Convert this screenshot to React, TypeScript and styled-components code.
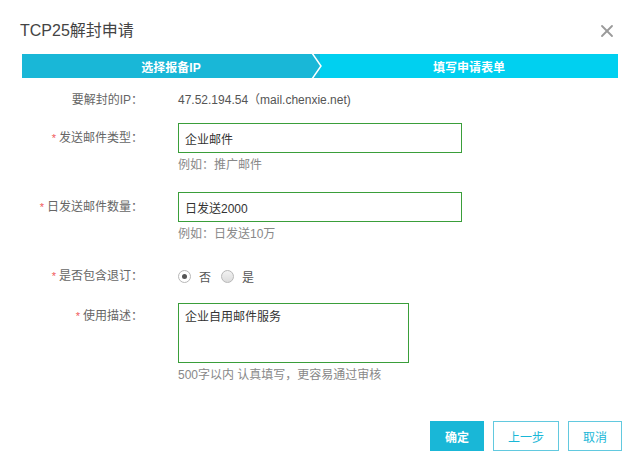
import React from 'react';
import styled, { createGlobalStyle } from 'styled-components';
import { X } from 'lucide-react';

const GlobalStyle = createGlobalStyle`
  html, body {
    margin: 0;
    padding: 0;
    background: #fff;
  }
  body {
    font-family: "Liberation Sans", "Noto Sans CJK SC", sans-serif;
    font-size: 12px;
    color: #555;
  }
`;

const CYAN = '#19b7d7';

const Dialog = styled.div`
  width: 640px;
  height: 466px;
  background: #fff;
  box-sizing: border-box;
`;

const Header = styled.div`
  display: flex;
  align-items: center;
  justify-content: space-between;
  padding: 20px 23px 0 20px;
  height: 42px;
  box-sizing: border-box;
`;

const Title = styled.h3`
  margin: 0;
  font-size: 16px;
  font-weight: normal;
  line-height: 22px;
  color: #444;
`;

const CloseButton = styled.button`
  border: 0;
  background: none;
  padding: 0;
  display: flex;
  color: #9a9a9a;
  cursor: pointer;
`;

// ============================================================
// Step bar
// ============================================================
const StepBar = styled.div`
  position: relative;
  display: flex;
  height: 24px;
  margin: 12px 22px 0;
`;

const Step = styled.div<{ $done?: boolean }>`
  flex: 1;
  display: flex;
  align-items: center;
  justify-content: center;
  background: ${(p) => (p.$done ? CYAN : '#00d0f0')};
  color: #fff;
  font-size: 12px;
  font-weight: bold;
`;

const StepArrow = styled.svg`
  position: absolute;
  top: 0;
  left: 50%;
  margin-left: -16px;
`;

// ============================================================
// Form
// ============================================================
const Form = styled.div`
  display: flex;
  flex-direction: column;
  padding-left: 22px;
`;

const Row = styled.div<{ $top: number }>`
  display: flex;
  align-items: flex-start;
  margin-top: ${(p) => p.$top}px;
`;

const Label = styled.div<{ $lh?: number }>`
  width: 121px;
  flex-shrink: 0;
  text-align: right;
  line-height: ${(p) => p.$lh ?? 20}px;
  color: #666;
`;

const Required = styled.span`
  color: #f05a5a;
  font-size: 11px;
  margin-right: 3px;
`;

const Field = styled.div`
  margin-left: 35px;
  display: flex;
  flex-direction: column;
`;

const Value = styled.div`
  line-height: 20px;
  color: #555;
`;

const TextInput = styled.input`
  width: 284px;
  height: 30px;
  box-sizing: border-box;
  border: 1px solid #3a9e3a;
  padding: 0 6px;
  font-family: inherit;
  font-size: 12px;
  color: #333;
  outline: none;
`;

const TextArea = styled.textarea`
  width: 231px;
  height: 60px;
  box-sizing: border-box;
  border: 1px solid #3a9e3a;
  padding: 5px 6px;
  line-height: 16px;
  font-family: inherit;
  font-size: 12px;
  color: #333;
  outline: none;
  resize: none;
`;

const Hint = styled.div`
  margin-top: 3px;
  line-height: 18px;
  color: #888;
`;

const RadioGroup = styled.div`
  display: flex;
  align-items: center;
  height: 20px;
  color: #555;
`;

const RadioItem = styled.label`
  display: flex;
  align-items: center;
  margin-right: 10px;
`;

const RadioDot = styled.span<{ $checked?: boolean }>`
  width: 11px;
  height: 11px;
  border-radius: 50%;
  border: 1px solid #b8b8b8;
  background: ${(p) => (p.$checked ? '#fff' : 'linear-gradient(#f2f2f2, #dcdcdc)')};
  margin-right: 8px;
  display: flex;
  align-items: center;
  justify-content: center;

  &::after {
    content: '';
    display: ${(p) => (p.$checked ? 'block' : 'none')};
    width: 5px;
    height: 5px;
    border-radius: 50%;
    background: #555;
  }
`;

// ============================================================
// Footer
// ============================================================
const Footer = styled.div`
  display: flex;
  justify-content: flex-end;
  gap: 9px;
  padding-right: 18px;
  margin-top: 37px;
`;

const Button = styled.button<{ $primary?: boolean; $w: number }>`
  width: ${(p) => p.$w}px;
  height: 30px;
  box-sizing: border-box;
  border: 1px solid ${(p) => (p.$primary ? CYAN : '#62c9df')};
  background: ${(p) => (p.$primary ? CYAN : '#fff')};
  color: ${(p) => (p.$primary ? '#fff' : CYAN)};
  font-family: inherit;
  font-size: 12px;
  font-weight: ${(p) => (p.$primary ? 'bold' : 'normal')};
  cursor: pointer;
  padding: 0;
`;

const App: React.FC = () => {
  return (
    <>
      <GlobalStyle />
      <Dialog>
        <Header>
          <Title>TCP25解封申请</Title>
          <CloseButton aria-label="close">
            <X size={20} strokeWidth={2.2} />
          </CloseButton>
        </Header>

        <StepBar>
          <Step $done>选择报备IP</Step>
          <Step>填写申请表单</Step>
          <StepArrow width="26" height="24" viewBox="0 0 26 24">
            <polygon points="0,0 8,0 17,12 8,24 0,24" fill={CYAN} />
            <polyline points="8,-1 17,12 8,25" fill="none" stroke="#fff" strokeWidth="1.5" />
          </StepArrow>
        </StepBar>

        <Form>
          <Row $top={12}>
            <Label>要解封的IP：</Label>
            <Field>
              <Value>47.52.194.54（mail.chenxie.net)</Value>
            </Field>
          </Row>

          <Row $top={13}>
            <Label $lh={30}>
              <Required>*</Required>发送邮件类型：
            </Label>
            <Field>
              <TextInput readOnly defaultValue="企业邮件" />
              <Hint>例如：推广邮件</Hint>
            </Field>
          </Row>

          <Row $top={18}>
            <Label $lh={30}>
              <Required>*</Required>日发送邮件数量：
            </Label>
            <Field>
              <TextInput readOnly defaultValue="日发送2000" />
              <Hint>例如：日发送10万</Hint>
            </Field>
          </Row>

          <Row $top={23}>
            <Label>
              <Required>*</Required>是否包含退订：
            </Label>
            <Field>
              <RadioGroup>
                <RadioItem>
                  <RadioDot $checked />否
                </RadioItem>
                <RadioItem>
                  <RadioDot />是
                </RadioItem>
              </RadioGroup>
            </Field>
          </Row>

          <Row $top={17}>
            <Label $lh={26}>
              <Required>*</Required>使用描述：
            </Label>
            <Field>
              <TextArea readOnly defaultValue="企业自用邮件服务" />
              <Hint>500字以内 认真填写，更容易通过审核</Hint>
            </Field>
          </Row>
        </Form>

        <Footer>
          <Button $primary $w={54}>确定</Button>
          <Button $w={66}>上一步</Button>
          <Button $w={54}>取消</Button>
        </Footer>
      </Dialog>
    </>
  );
};

export default App;
